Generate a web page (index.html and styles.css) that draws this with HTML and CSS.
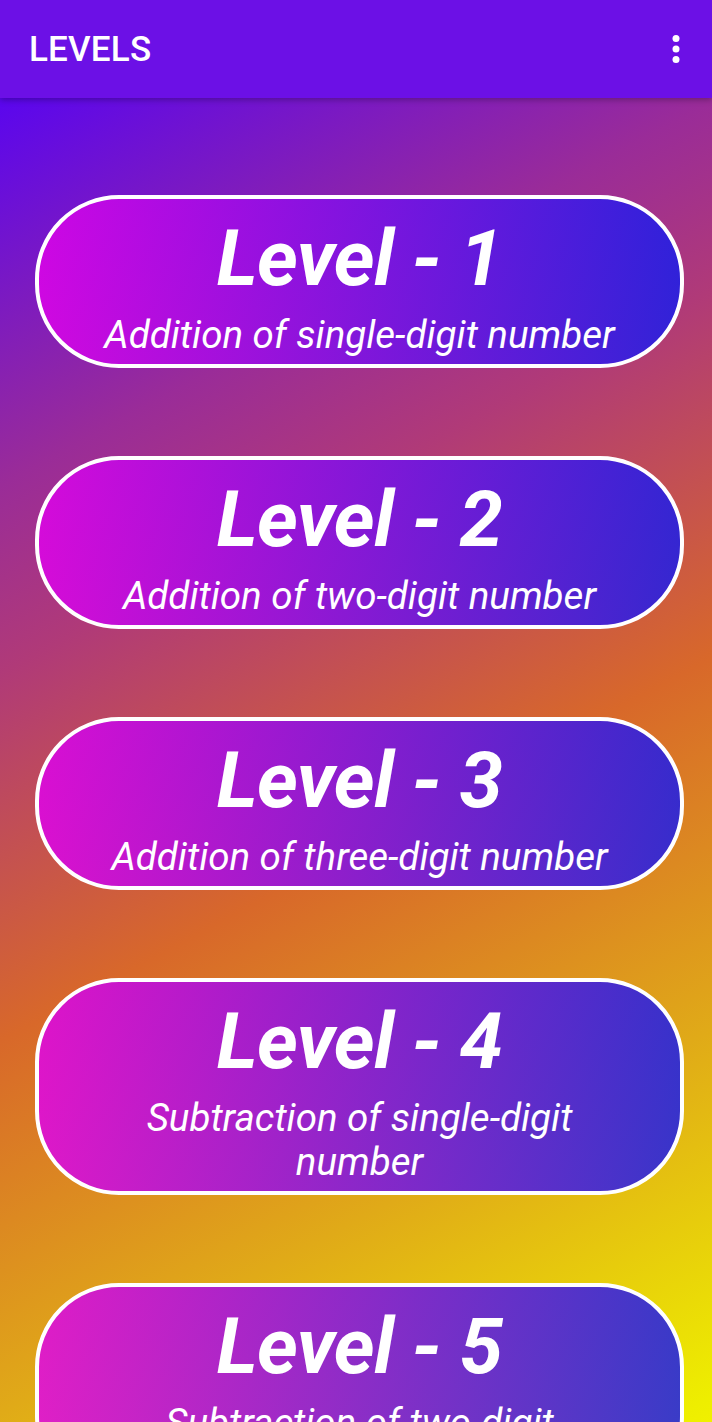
FILE: index.html
```html
<!DOCTYPE html>
<html lang="en">
<head>
<meta charset="utf-8">
<title>Levels</title>
<link rel="stylesheet" href="styles.css">
</head>
<body>
<div class="screen">
  <header class="toolbar">
    <h1 class="toolbar-title">LEVELS</h1>
    <button class="menu-btn" aria-label="More options">
      <svg viewBox="0 0 24 24" width="42" height="42"><circle cx="12" cy="6" r="2" fill="#fff"/><circle cx="12" cy="12" r="2" fill="#fff"/><circle cx="12" cy="18" r="2" fill="#fff"/></svg>
    </button>
  </header>
  <main class="levels">
    <div class="level-card">
      <div class="level-title">Level - 1</div>
      <div class="level-desc">Addition of single-digit number</div>
    </div>
    <div class="level-card">
      <div class="level-title">Level - 2</div>
      <div class="level-desc">Addition of two-digit number</div>
    </div>
    <div class="level-card">
      <div class="level-title">Level - 3</div>
      <div class="level-desc">Addition of three-digit number</div>
    </div>
    <div class="level-card">
      <div class="level-title">Level - 4</div>
      <div class="level-desc">Subtraction of single-digit number</div>
    </div>
    <div class="level-card">
      <div class="level-title">Level - 5</div>
      <div class="level-desc">Subtraction of two-digit number</div>
    </div>
  </main>
</div>
</body>
</html>
```
FILE: styles.css
```css
* { box-sizing: border-box; }
html, body { margin: 0; padding: 0; }
body {
  font-family: Roboto, "Noto Sans", "Liberation Sans", sans-serif;
  color: #fff;
  width: 712px;
  height: 1422px;
  overflow: hidden;
}
.screen {
  display: flex;
  flex-direction: column;
  height: 1422px;
}
.toolbar {
  position: relative;
  z-index: 2;
  flex: 0 0 98px;
  height: 98px;
  background: #6c10e6;
  display: flex;
  align-items: center;
  justify-content: space-between;
  padding: 0 15px 0 29px;
  box-shadow: 0 2px 6px rgba(0, 0, 0, 0.28);
}
.toolbar-title {
  margin: 0;
  font-size: 35px;
  font-weight: 500;
  letter-spacing: 0.2px;
}
.menu-btn {
  border: 0;
  padding: 0;
  background: none;
  width: 42px;
  height: 42px;
  display: block;
}
.menu-btn svg { display: block; }
.levels {
  flex: 1;
  overflow: hidden;
  background: linear-gradient(151.7deg,
    #5a06ee 0%,
    #9a2c98 22.7%,
    #b03a78 33.7%,
    #d8682a 55.2%,
    #e0aa18 77%,
    #eeee00 98.5%,
    #f0f000 100%);
  display: flex;
  flex-direction: column;
  gap: 88px;
  padding: 97px 28px 0 35px;
}
.level-card {
  flex: 0 0 auto;
  border: 4px solid #fff;
  border-radius: 84px;
  background: linear-gradient(to right, rgba(222, 4, 232, 0.84), rgba(28, 30, 232, 0.86));
  padding: 15px 60px 7px;
  text-align: center;
}
.level-title {
  font-size: 78px;
  line-height: 90px;
  font-weight: 700;
  font-style: italic;
  letter-spacing: -0.7px;
}
.level-desc {
  margin-top: 9px;
  font-size: 38.5px;
  line-height: 44px;
  font-style: italic;
  font-weight: 400;
}
```
